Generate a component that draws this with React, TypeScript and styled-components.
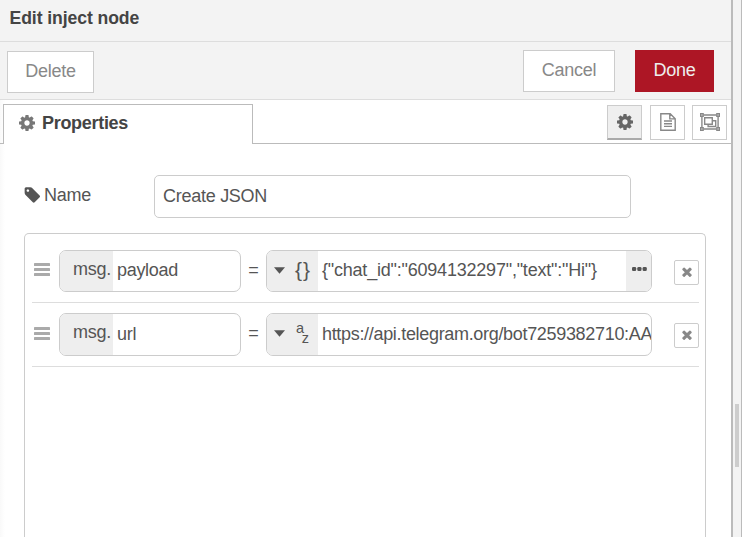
import React from "react";
import styled, { createGlobalStyle } from "styled-components";

const GlobalStyle = createGlobalStyle`
  * { box-sizing: border-box; }
  html, body { margin: 0; padding: 0; overflow: hidden; background: #fff; }
  body { font-family: "Liberation Sans", Arial, Helvetica, sans-serif; font-size: 18px; line-height: 24px; color: #555; }
`;

const Editor = styled.div`
  display: grid;
  grid-template-columns: 731px 11px;
  width: 742px;
  height: 537px;
  overflow: hidden;
`;

const Tray = styled.main`
  display: flex;
  flex-direction: column;
  min-width: 0;
  background: linear-gradient(to right, #f9f9f9, #fff 5px);
`;

const Sidebar = styled.aside`
  background: #f3f3f3;
  border-left: 2px solid #bbb;
  border-right: 1px solid #bbb;
  padding: 404px 0 0 2px;
`;

const Thumb = styled.div`
  width: 4px;
  height: 63px;
  background: #cdcdcd;
`;

const Header = styled.header`
  height: 42px;
  padding: 6px 0 0 9.5px;
  background: #f3f3f3;
  border-bottom: 1px solid #ddd;
  font-weight: bold;
  font-size: 17.6px;
  letter-spacing: -0.08px;
  color: #444;
`;

const Toolbar = styled.div`
  display: flex;
  align-items: flex-start;
  height: 58px;
  padding: 8px 17px 0 7px;
  background: #f3f3f3;
  border-bottom: 1px solid #ddd;
`;

const Button = styled.button<{ $width: number; $primary?: boolean }>`
  width: ${(p) => p.$width}px;
  height: 42px;
  padding: 0 0 3px;
  border: 1px solid ${(p) => (p.$primary ? "#ad1625" : "#ccc")};
  background: ${(p) => (p.$primary ? "#ad1625" : "#fff")};
  color: ${(p) => (p.$primary ? "#eee" : "#888")};
  font: inherit;
  letter-spacing: -0.25px;
`;

const DeleteButton = styled(Button)`
  margin: 1px auto 0 0;
`;

const DoneButton = styled(Button)`
  margin-left: 20px;
`;

const TabBar = styled.div`
  display: flex;
  height: 44px;
  flex: none;
`;

const TabEdge = styled.div<{ $width?: number }>`
  ${(p) => (p.$width ? `width: ${p.$width}px;` : "flex: 1;")}
  display: flex;
  justify-content: flex-end;
  gap: 7px;
  padding: 5px ${(p) => (p.$width ? 0 : 4)}px 0 0;
  border-bottom: 1px solid #bbb;
`;

const Tab = styled.div`
  display: flex;
  align-items: center;
  width: 250px;
  margin-top: 4px;
  padding: 0 0 4px 15px;
  gap: 7px;
  background: #fff;
  border: 1px solid #bbb;
  border-bottom: 0;
  font-weight: bold;
  letter-spacing: -0.3px;
  color: #444;
`;

const TabButton = styled.button<{ $active?: boolean }>`
  display: flex;
  align-items: center;
  justify-content: center;
  width: 35px;
  height: 35px;
  padding: 0 0 1px;
  border: 1px solid #ccc;
  border-bottom: ${(p) => (p.$active ? "2px solid #aaa" : "1px solid #ccc")};
  background: ${(p) => (p.$active ? "#efefef" : "#fff")};
  color: ${(p) => (p.$active ? "#666" : "#888")};
  &:nth-child(2) { margin-left: 1px; }
  &:nth-child(3) { padding-left: 1px; }
`;

const Form = styled.section`
  display: flex;
  flex-direction: column;
  flex: 1;
  min-height: 0;
  padding: 31px 25px 0 24px;
`;

const Field = styled.div`
  display: flex;
  height: 43px;
  flex: none;
`;

const Label = styled.label`
  display: flex;
  align-items: center;
  gap: 4px;
  width: 130px;
  padding-bottom: 4px;
  letter-spacing: -0.25px;
`;

const NameBox = styled.div`
  width: 477px;
  border: 1px solid #ccc;
  border-radius: 5px;
  background: #fff;
  padding: 8px 8px 0;
  letter-spacing: -0.27px;
`;

const Rules = styled.div`
  flex: 1;
  margin-top: 15px;
  padding: 6px 6px 0 7px;
  border: 1px solid #ccc;
  border-bottom: 0;
  border-radius: 5px 5px 0 0;
`;

const Rule = styled.div<{ $height: number }>`
  display: flex;
  align-items: flex-start;
  height: ${(p) => p.$height}px;
  padding: 10px 0 0 2px;
  border-bottom: 1px solid #ddd;
`;

const Handle = styled.span<{ $top: number }>`
  display: flex;
  width: 25px;
  padding-top: ${(p) => p.$top}px;
  color: #aaa;
`;

const TypedInput = styled.div<{ $width: number; $height: number }>`
  display: flex;
  width: ${(p) => p.$width}px;
  height: ${(p) => p.$height}px;
  border: 1px solid #ccc;
  border-radius: 7px;
  background: #fff;
  overflow: hidden;
`;

const TypeSelect = styled.div<{ $width: number; $pad: number }>`
  display: flex;
  flex: none;
  width: ${(p) => p.$width}px;
  padding: 6px 0 0 ${(p) => p.$pad}px;
  background: #eee;
  letter-spacing: -0.25px;
`;

const Value = styled.div<{ $top: number; $tracking: number }>`
  flex: 1;
  min-width: 0;
  padding: ${(p) => p.$top}px 0 0 4px;
  letter-spacing: ${(p) => p.$tracking}px;
  white-space: nowrap;
  overflow: hidden;
`;

const Caret = styled.svg`
  margin: 10px 0 0 7px;
  display: block;
`;

const Braces = styled.span`
  margin-left: 10px;
  padding-top: 1px;
  font-size: 21px;
  letter-spacing: 1px;
`;

const SortGlyph = styled.span`
  display: flex;
  align-items: flex-start;
  margin: 4px 0 0 11px;
  font-size: 14.5px;
  line-height: 9px;
`;

const Lowered = styled.span`
  margin: 10px 0 0 -2px;
`;

const Expand = styled.div`
  display: flex;
  flex: none;
  width: 25px;
  padding: 16px 0 0 6px;
  background: #eee;
`;

const Equals = styled.span`
  width: 25px;
  padding-top: 8px;
  text-align: center;
`;

const RemoveButton = styled.button`
  display: flex;
  align-items: center;
  justify-content: center;
  width: 25px;
  height: 25px;
  margin: 10px 0 0 auto;
  padding: 0 0 2px;
  border: 1px solid #ccc;
  border-radius: 2px;
  background: #fff;
  color: #888;
`;

const Cog = () => (
  <svg width="16" height="16" viewBox="128 128 1536 1536" fill="currentColor">
    <path d="M1152 896q0-106-75-181t-181-75-181 75-75 181 75 181 181 75 181-75 75-181zm512-109v222q0 12-8 23t-20 13l-185 28q-19 54-39 91 35 50 107 138 10 12 10 25t-9 23q-27 37-99 108t-94 71q-12 0-26-9l-138-108q-44 23-91 38-16 136-29 186-7 28-36 28h-222q-14 0-24.5-8.5t-11.5-21.5l-28-184q-49-16-90-37l-141 107q-10 9-25 9-14 0-25-11-126-114-165-168-7-10-7-23 0-12 8-23 15-21 51-66.5t54-70.5q-27-50-41-99l-183-27q-13-2-21-12.5t-8-23.5v-222q0-12 8-23t19-13l186-28q14-46 39-92-40-57-107-138-10-12-10-24 0-10 9-23 26-36 98.5-107.5t94.5-71.5q13 0 26 10l138 107q44-23 91-38 16-136 29-186 7-28 36-28h222q14 0 24.5 8.5t11.5 21.5l28 184q49 16 90 37l142-107q9-9 24-9 13 0 25 10 129 119 165 170 7 8 7 22 0 12-8 23-15 21-51 66.5t-54 70.5q26 50 41 98l183 28q13 2 21 12.5t8 23.5z" />
  </svg>
);

const TabCog = styled.span`
  display: flex;
  color: #777;
`;

const FileText = () => (
  <svg width="16" height="18" viewBox="0 0 16 18" fill="none" stroke="currentColor" strokeWidth="1.4">
    <path d="M.8.7h9.4l5 5v11.6H.8zM9.8.7v5.2h5M4 8h8M4 10.7h8M4 13.4h8" />
  </svg>
);

const ObjectGroup = () => (
  <svg width="20" height="18" viewBox="0 0 21 18" preserveAspectRatio="none" fill="none" stroke="currentColor" strokeWidth="1.45">
    <path d="M3.5 2h14M3.5 16h14M2 3.5v11M19 3.5v11" />
    <path d="M.7.7h2.6v2.6H.7zM17.7.7h2.6v2.6h-2.6zM.7 14.7h2.6v2.6H.7zM17.7 14.7h2.6v2.6h-2.6z" />
    <path d="M4.9 4.7h8v6.6h-8zM12.9 7.7h3.6v5.8h-8v-2" />
  </svg>
);

const Tag = () => (
  <svg width="16" height="16" viewBox="64 128 1579 1515" fill="currentColor">
    <path d="M576 448q0-53-37.5-90.5t-90.5-37.5-90.5 37.5-37.5 90.5 37.5 90.5 90.5 37.5 90.5-37.5 37.5-90.5zm1067 576q0 53-37 90l-491 492q-39 37-91 37-53 0-90-37l-715-716q-38-37-64.5-101t-26.5-117v-416q0-52 38-90t90-38h416q53 0 117 26.5t102 64.5l715 714q37 39 37 91z" />
  </svg>
);

const Bars = () => (
  <svg width="16" height="13" viewBox="0 0 16 13" fill="currentColor">
    <rect width="16" height="3" rx="0.6" />
    <rect y="5" width="16" height="3" rx="0.6" />
    <rect y="10" width="16" height="3" rx="0.6" />
  </svg>
);

const Times = () => (
  <svg width="10" height="10" viewBox="302 302 1188 1252" fill="currentColor">
    <path d="M1490 1322q0 40-28 68l-136 136q-28 28-68 28t-68-28l-294-294-294 294q-28 28-68 28t-68-28l-136-136q-28-28-28-68t28-68l294-294-294-294q-28-28-28-68t28-68l136-136q28-28 68-28t68 28l294 294 294-294q28-28 68-28t68 28l136 136q28 28 28 68t-28 68l-294 294 294 294q28 28 28 68z" />
  </svg>
);

const Dots = () => (
  <svg width="15" height="4" viewBox="0 0 15 4" fill="#555">
    <rect width="4.2" height="4" rx="1.3" />
    <rect x="5.3" width="4.2" height="4" rx="1.3" />
    <rect x="10.6" width="4.2" height="4" rx="1.3" />
  </svg>
);

type RuleRowProps = { property: string; value: string; tracking: number; json?: boolean };

const RuleRow = ({ property, value, tracking, json }: RuleRowProps) => {
  const boxHeight = json ? 42 : 43;
  const textTop = json ? 7 : 8;
  return (
    <Rule $height={json ? 63 : 64}>
      <Handle $top={json ? 13 : 14}><Bars /></Handle>
      <TypedInput $width={182} $height={boxHeight}>
        <TypeSelect $width={53} $pad={13}>msg.</TypeSelect>
        <Value $top={textTop} $tracking={-0.3}>{property}</Value>
      </TypedInput>
      <Equals>=</Equals>
      <TypedInput $width={386} $height={boxHeight}>
        <TypeSelect $width={51} $pad={0}>
          <Caret width="11" height="7" viewBox="0 0 11 7"><path d="M0 .3h11L5.5 6.8z" fill="#555" /></Caret>
          {json ? <Braces>{"{}"}</Braces> : <SortGlyph>a<Lowered>z</Lowered></SortGlyph>}
        </TypeSelect>
        <Value $top={textTop} $tracking={tracking}>{value}</Value>
        {json && <Expand><Dots /></Expand>}
      </TypedInput>
      <RemoveButton aria-label="Remove"><Times /></RemoveButton>
    </Rule>
  );
};

export default function App() {
  return (
    <>
      <GlobalStyle />
      <Editor>
        <Tray>
          <Header>Edit inject node</Header>
          <Toolbar>
            <DeleteButton $width={87}>Delete</DeleteButton>
            <Button $width={92}>Cancel</Button>
            <DoneButton $width={79} $primary>Done</DoneButton>
          </Toolbar>
          <TabBar>
            <TabEdge $width={3} />
            <Tab><TabCog><Cog /></TabCog>Properties</Tab>
            <TabEdge>
              <TabButton $active aria-label="Properties"><Cog /></TabButton>
              <TabButton aria-label="Description"><FileText /></TabButton>
              <TabButton aria-label="Appearance"><ObjectGroup /></TabButton>
            </TabEdge>
          </TabBar>
          <Form>
            <Field>
              <Label><Tag />Name</Label>
              <NameBox>Create JSON</NameBox>
            </Field>
            <Rules>
              <RuleRow property="payload" value={'{"chat_id":"6094132297","text":"Hi"}'} tracking={-0.21} json />
              <RuleRow property="url" value="https://api.telegram.org/bot7259382710:AA" tracking={-0.32} />
            </Rules>
          </Form>
        </Tray>
        <Sidebar><Thumb /></Sidebar>
      </Editor>
    </>
  );
}
